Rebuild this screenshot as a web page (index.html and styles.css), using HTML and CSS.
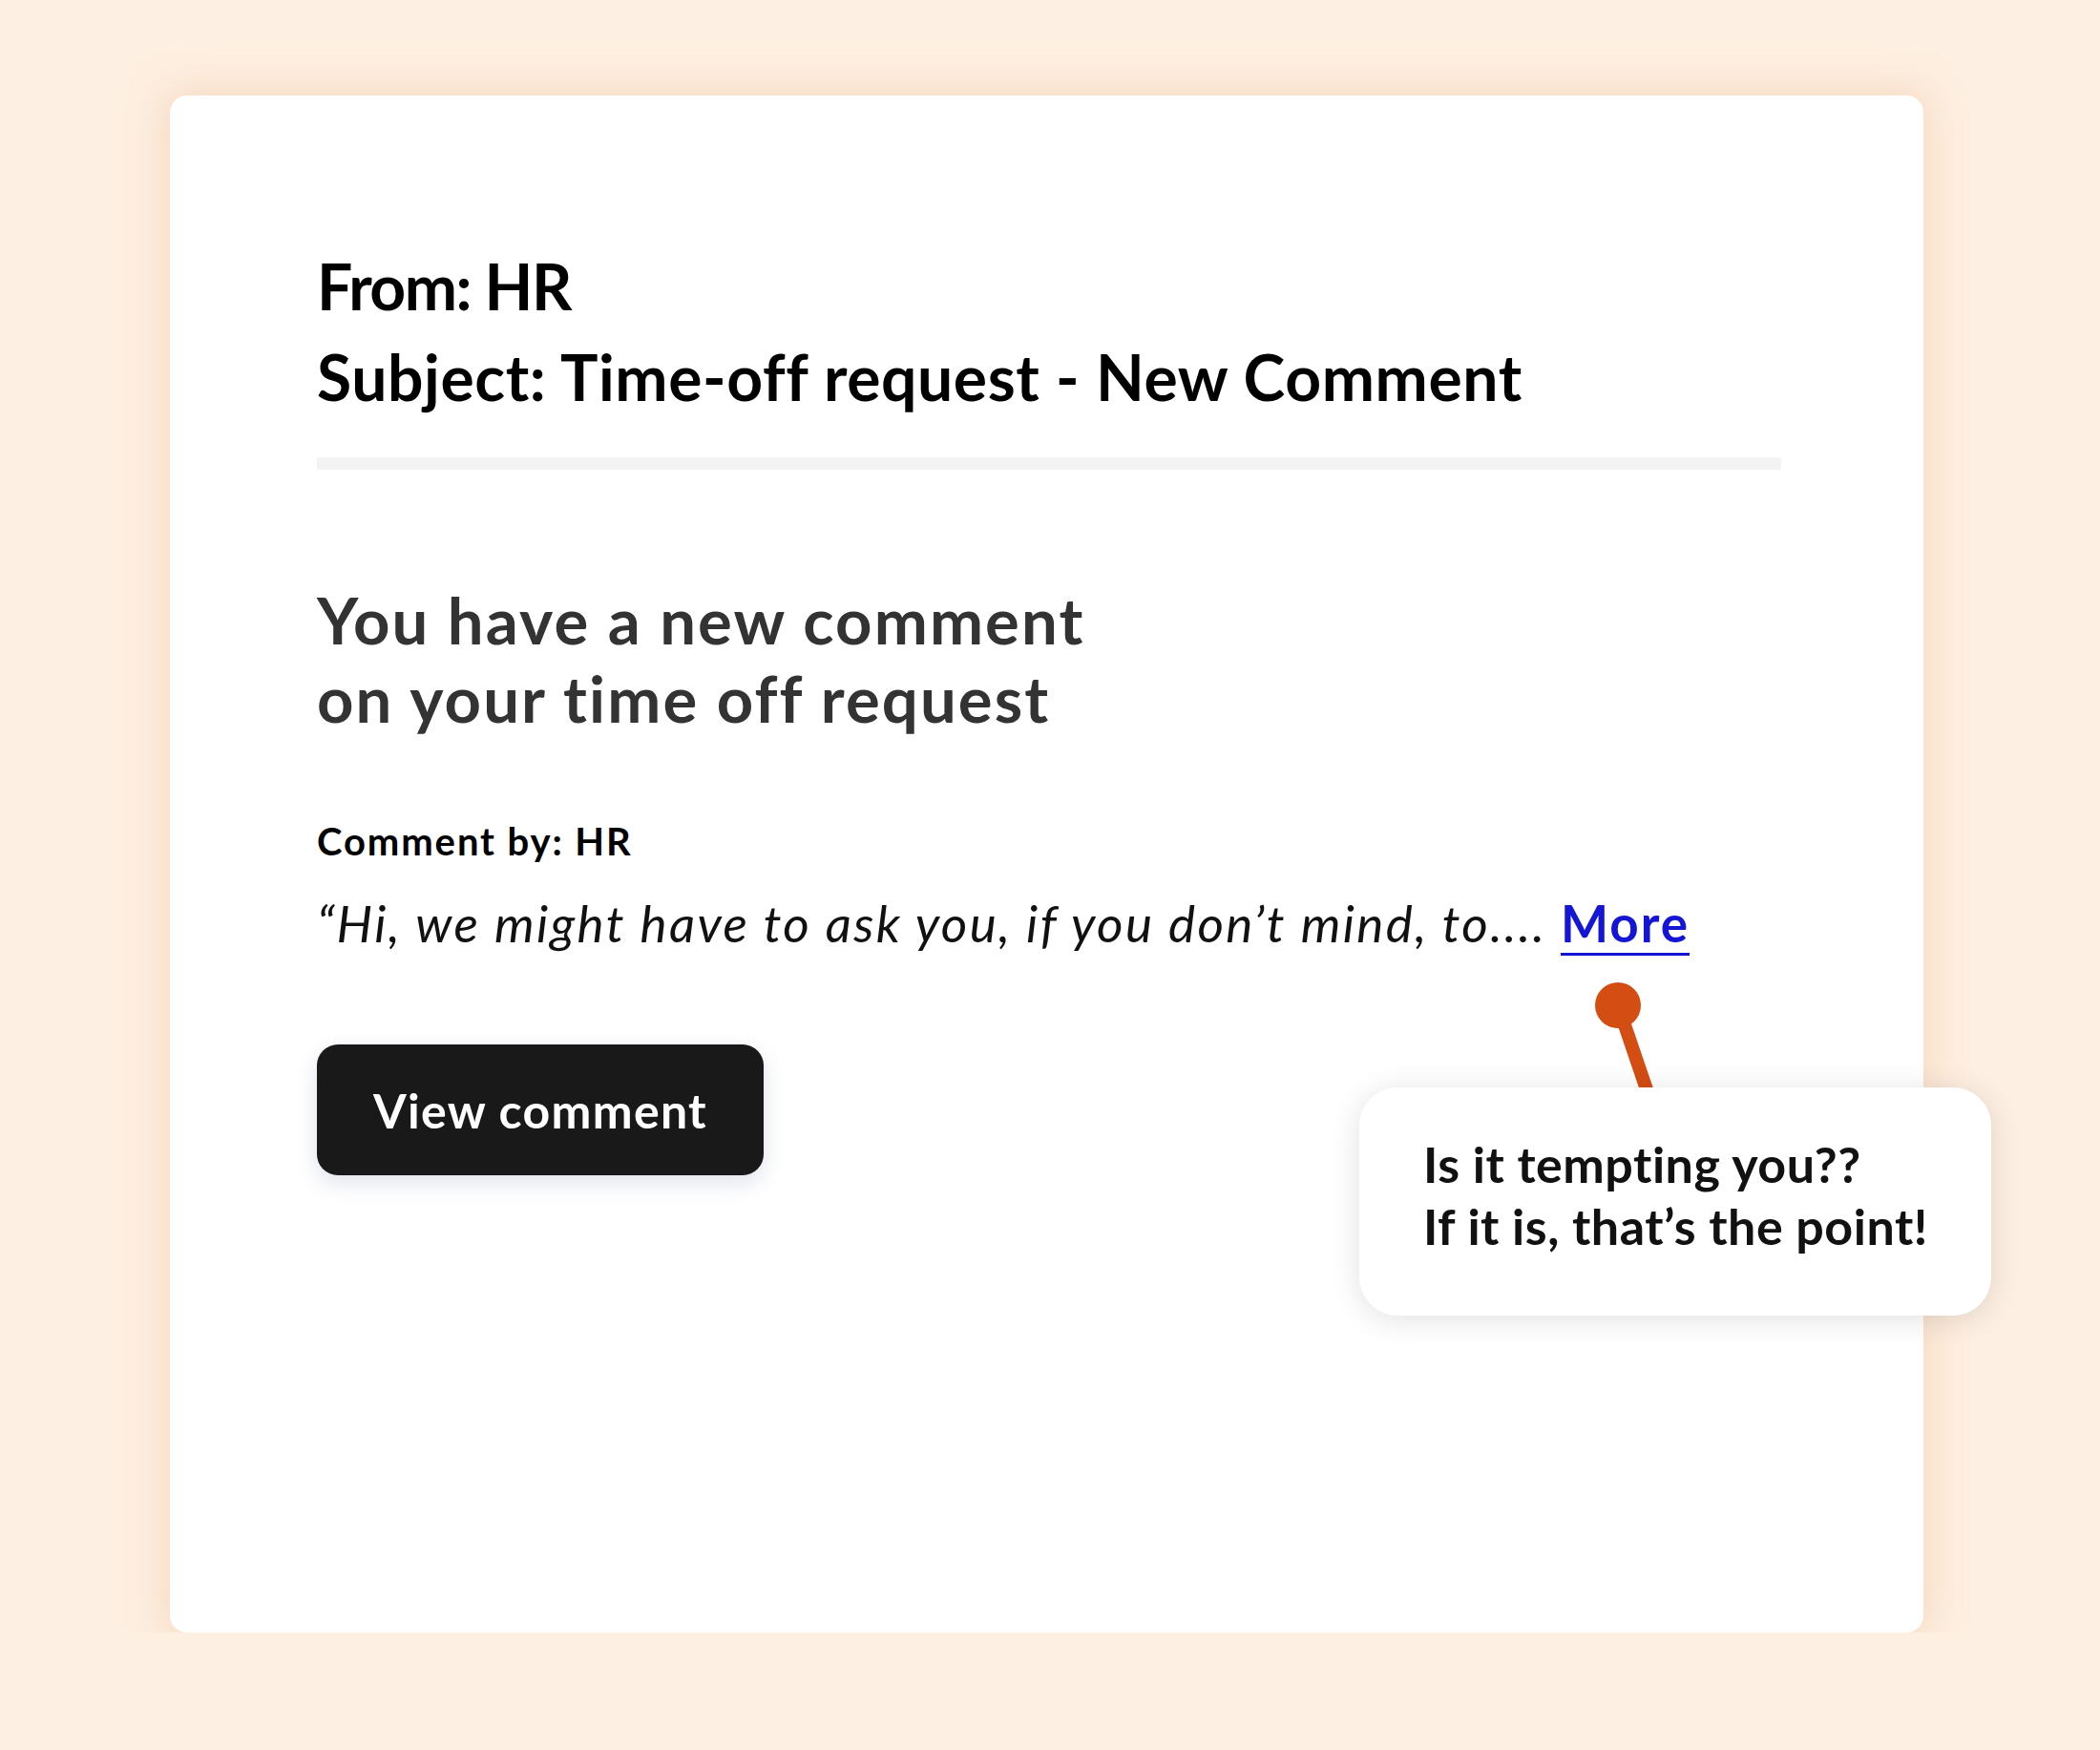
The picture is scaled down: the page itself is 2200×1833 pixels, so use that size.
FILE: index.html
```html
<!DOCTYPE html>
<html lang="en">
<head>
    <meta charset="UTF-8">
    <meta name="viewport" content="width=device-width, initial-scale=1.0">
    <title>Time-off request - New Comment</title>
    <link rel="stylesheet" href="styles.css">
</head>
<body>
    <div class="card">
        <div class="mail-head">
            <p class="from">From: HR</p>
            <p class="subject">Subject: Time-off request - New Comment</p>
        </div>
        <div class="divider"></div>

        <h1 class="headline">You have a new comment<br>on your time off request</h1>

        <p class="comment-by">Comment by: HR</p>
        <p class="quote">&ldquo;Hi, we might have to ask you, if you don&rsquo;t mind, to.... <a href="#" class="more">More</a></p>

        <button class="view-btn">View comment</button>

        <!-- pin pointing from the bubble up to the "More" link -->
        <svg class="pin" width="70" height="130" viewBox="0 0 70 130">
            <line x1="27" y1="28" x2="60" y2="125" stroke="#d44d13" stroke-width="14"/>
            <circle cx="27" cy="28" r="24" fill="#d44d13"/>
        </svg>

        <div class="bubble">
            <p>Is it tempting you??</p>
            <p>If it is, that&rsquo;s the point!</p>
        </div>
    </div>
</body>
</html>
```

FILE: styles.css
```css
body {
    margin: 0;
    background-color: #fdefe1;
    font-family: Lato, "Liberation Sans", sans-serif;
    font-variant-ligatures: no-common-ligatures;
    color: #000;
}

/* White mail card */
.card {
    position: relative;
    box-sizing: border-box;
    width: 1837px;
    height: 1610px;
    margin: 100px 0 0 178px;
    padding: 152px 149px 0 154px;
    background-color: #ffffff;
    border-radius: 18px;
    box-shadow: 0 0 36px 6px rgba(242, 200, 168, 0.55);
}

.mail-head p {
    margin: 0;
    font-size: 66px;
    line-height: 95px;
    font-weight: 700;
    color: #000;
}

.mail-head .from {
    letter-spacing: -1.5px;
}

.mail-head .subject {
    letter-spacing: 0.6px;
}

.divider {
    height: 13px;
    margin-top: 37px;
    background-color: #f3f3f3;
    border-radius: 2px;
}

.headline {
    margin: 116px 0 0;
    font-size: 67px;
    line-height: 82px;
    font-weight: 700;
    letter-spacing: 2.1px;
    color: #333333;
}

.comment-by {
    margin: 84px 0 0;
    font-size: 40px;
    line-height: 50px;
    font-weight: 700;
    letter-spacing: 1.9px;
}

.quote {
    margin: 28px 0 0;
    font-size: 53px;
    line-height: 66px;
    font-style: italic;
    letter-spacing: 2.35px;
    color: #111;
}

.more {
    font-style: normal;
    font-weight: 700;
    letter-spacing: 2px;
    color: #1515d6;
    text-decoration: underline;
    text-decoration-thickness: 3px;
    text-underline-offset: 11px;
}

.view-btn {
    display: block;
    width: 468px;
    height: 137px;
    margin-top: 94px;
    padding: 0;
    border: none;
    border-radius: 22px;
    background-color: #19191a;
    color: #fff;
    font-family: inherit;
    font-size: 50px;
    font-weight: 700;
    letter-spacing: 1.3px;
    box-shadow: 0 8px 22px rgba(60, 80, 140, 0.16);
    cursor: pointer;
}

/* Annotation overlay */
.pin {
    position: absolute;
    left: 1490px;
    top: 925px;
}

.bubble {
    position: absolute;
    left: 1246px;
    top: 1039px;
    width: 662px;
    box-sizing: border-box;
    padding: 48px 0 61px 67px;
    background-color: #fff;
    border-radius: 40px;
    box-shadow: 0 4px 32px rgba(0, 0, 0, 0.12);
}

.bubble p {
    margin: 0;
    font-size: 52px;
    line-height: 65px;
    font-weight: 700;
    letter-spacing: 0.5px;
    color: #111;
}
```
